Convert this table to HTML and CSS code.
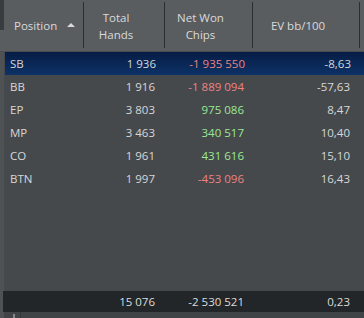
FILE: index.html
```html
<!DOCTYPE html>
<html>
<head>
<meta charset="utf-8">
<link rel="stylesheet" href="styles.css">
</head>
<body>
<div class="grid">
  <div class="corner"></div>
  <div class="head">
    <div class="hc hpos">Position <span class="arrow"></span></div>
    <div class="hc">Total<br>Hands</div>
    <div class="hc">Net Won<br>Chips</div>
    <div class="hc">EV bb/100</div>
    <div class="hc hlast"></div>
  </div>
  <div class="body">
    <div class="row sel"><span class="c1">SB</span><span class="c2">1 936</span><span class="c3 neg">-1 935 550</span><span class="c4">-8,63</span></div>
    <div class="row"><span class="c1">BB</span><span class="c2">1 916</span><span class="c3 neg">-1 889 094</span><span class="c4">-57,63</span></div>
    <div class="row"><span class="c1">EP</span><span class="c2">3 803</span><span class="c3 pos">975 086</span><span class="c4">8,47</span></div>
    <div class="row"><span class="c1">MP</span><span class="c2">3 463</span><span class="c3 pos">340 517</span><span class="c4">10,40</span></div>
    <div class="row"><span class="c1">CO</span><span class="c2">1 961</span><span class="c3 pos">431 616</span><span class="c4">15,10</span></div>
    <div class="row"><span class="c1">BTN</span><span class="c2">1 997</span><span class="c3 neg">-453 096</span><span class="c4">16,43</span></div>
  </div>
  <div class="foot">
    <span class="c1"></span><span class="c2">15 076</span><span class="c3">-2 530 521</span><span class="c4">0,23</span>
  </div>
  <div class="bar"><span class="tick"></span><span class="div"></span></div>
</div>
</body>
</html>
```
FILE: styles.css
```css
* { box-sizing: border-box; }
html, body { margin: 0; padding: 0; }
body {
  width: 364px; height: 318px; overflow: hidden;
  background: #46494c;
  font-family: "Open Sans", "Noto Sans", sans-serif;
  font-size: 11.5px;
  color: #d6d7d8;
}
.grid { position: relative; display: flex; flex-direction: column; height: 318px; border-left: 4px solid #4e5255; }
.corner { position: absolute; left: -4px; top: 0; width: 4px; height: 30px; background: #393c3f; }
.head {
  height: 52px; background: #5a5d60; display: grid;
  grid-template-columns: 80px 81px 88px 107px 1fr;
  align-items: stretch; color: #d9dadb;
  border-bottom: 1px solid #4a4d50;
  margin-left: -4px; padding-left: 4px;
}
.hc {
  display: flex; align-items: center; justify-content: center; text-align: center;
  line-height: 17px; position: relative; padding-right: 17px;
}
.hc::after {
  content: ""; position: absolute; right: 0; top: 2px; bottom: 3px; width: 1px; background: #2b2e30;
}
.hlast::after { display: none; }
.hpos { justify-content: flex-start; padding-left: 10px; padding-right: 0; }
.arrow {
  display: inline-block; width: 0; height: 0; margin-left: 10px; margin-bottom: 2px;
  border-left: 4px solid transparent; border-right: 4px solid transparent; border-bottom: 4px solid #d9dadb;
}
.body { flex: 1; }
.row, .foot {
  display: grid; grid-template-columns: 76px 75px 89px 106px 1fr;
  height: 23px; align-items: center;
}
.row.sel { background: linear-gradient(#061c45, #0d3266); margin-left: 1px; }
.row.sel .c1 { padding-left: 5px; }
.c1 { padding-left: 6px; }
.c2, .c3, .c4 { text-align: right; }
.neg { color: #ee8282; }
.pos { color: #9ae892; }
.foot { background: #222628; height: 21px; color: #dcdcdc; margin-left: -1px; padding-left: 1px; }
.bar { height: 6px; background: #404447; position: relative; }
.tick { position: absolute; left: 9px; top: 2px; width: 2px; height: 4px; background: #888; }
.div { position: absolute; left: 16px; top: 0; width: 1px; height: 6px; background: #35383a; }
```
